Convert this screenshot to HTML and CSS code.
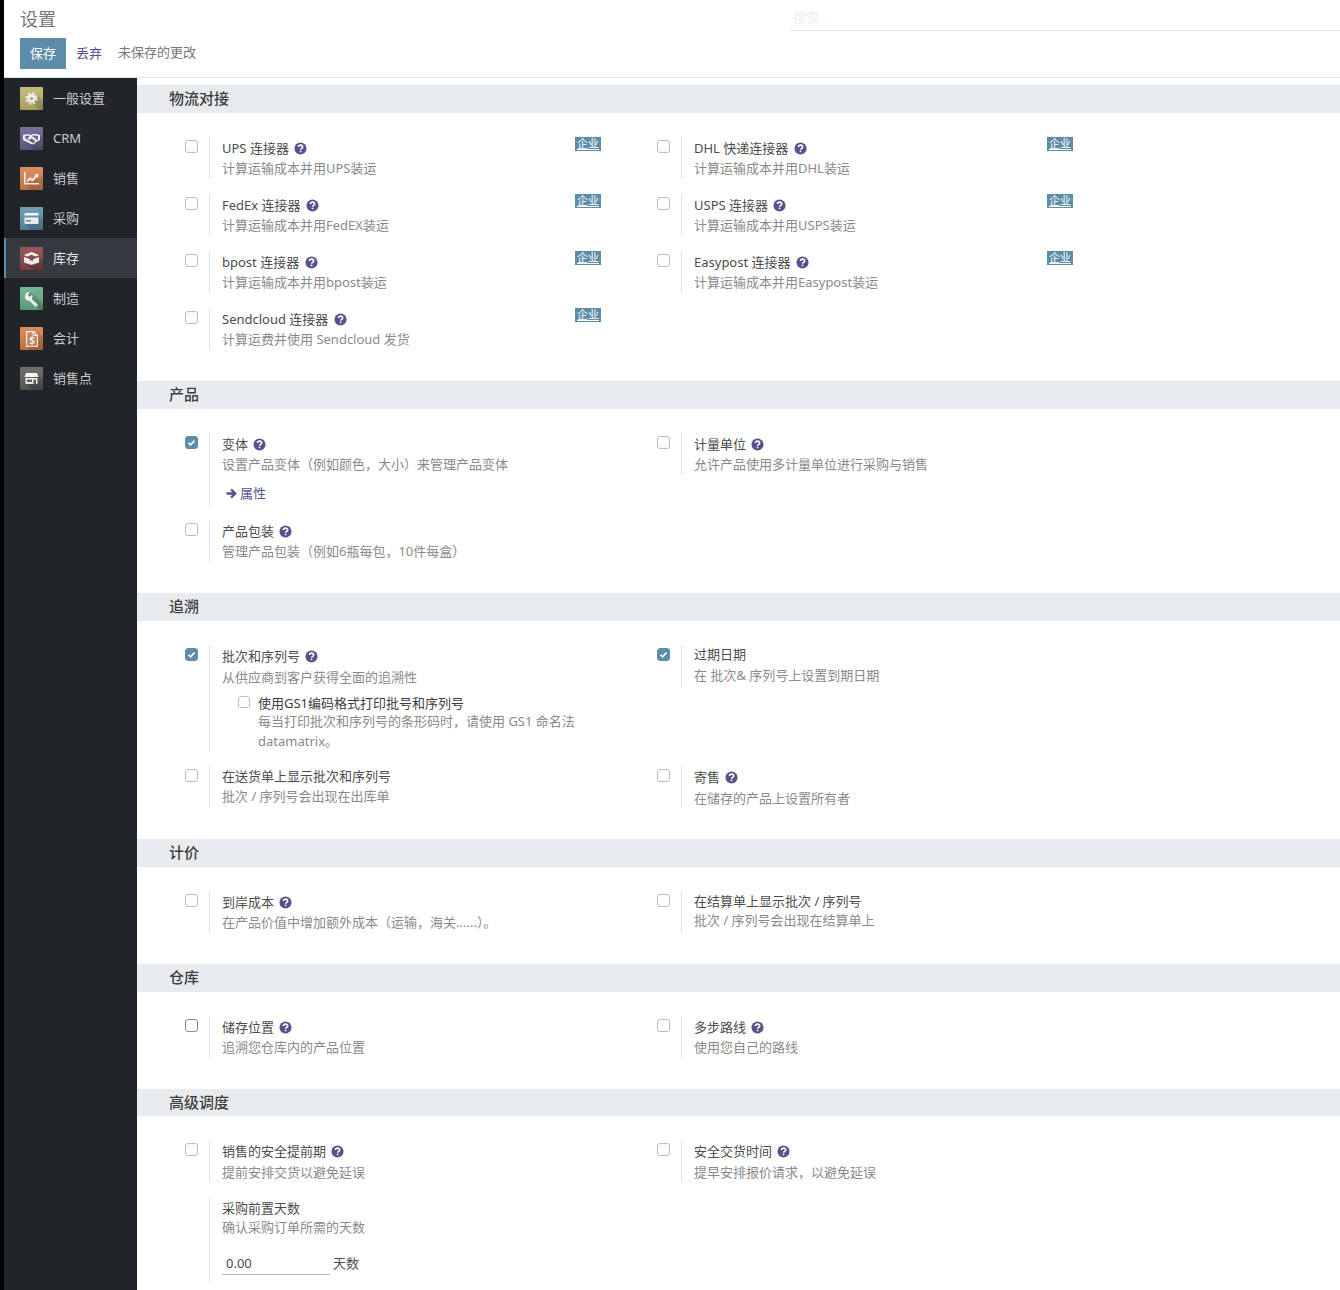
FILE: index.html
```html
<!DOCTYPE html>
<html lang="zh-CN">
<head>
  <meta charset="UTF-8" />
  <title>设置</title>
  <link rel="stylesheet" href="styles.css">
</head>
<body>
  <svg class="defs" width="0" height="0">
    <defs>
      <linearGradient id="sheen" x1="0" y1="0" x2="0" y2="1">
        <stop offset="0" stop-color="#fff" stop-opacity=".1"/>
        <stop offset="1" stop-color="#000" stop-opacity=".14"/>
      </linearGradient>
    </defs>
    <symbol id="help" viewBox="0 0 14 14">
      <circle cx="7" cy="7" r="6.5" fill="currentColor"/>
      <path d="M4.800 5.400c.1-1.300 1-2 2.300-2 1.300 0 2.200.8 2.200 1.900 0 1.700-2.100 1.600-2.100 3" fill="none" stroke="#fff" stroke-width="1.700"/>
      <rect x="6.200" y="9.300" width="1.700" height="1.700" fill="#fff"/>
    </symbol>
    <symbol id="tick" viewBox="0 0 13 13">
      <path d="M3.500 6.700l2.100 2.100 3.900-4.200" fill="none" stroke="#fff" stroke-width="1.600"/>
    </symbol>
  </svg>

  <header class="topbar">
    <div class="topbar-left">
      <div class="page-title">设置</div>
      <div class="actions">
        <button class="btn-save"><span>保存</span></button>
        <a class="btn-discard">丢弃</a>
        <span class="unsaved">未保存的更改</span>
      </div>
    </div>
    <div class="search">搜索...</div>
  </header>

  <div class="main">
    <nav class="sidebar">
      <a class="nav-item">
        <svg class="app-icon" viewBox="0 0 23 23"><rect width="23" height="23" rx="1" fill="#bfb56c"/><path d="M13 17l6 6h4v-9l-5-6z" fill="#a1985a"/><circle cx="11.500" cy="11.500" r="4.300" fill="#fff"/><circle cx="11.500" cy="11.500" r="5.300" fill="none" stroke="#fff" stroke-width="1.800" stroke-dasharray="2.200 2"/><circle cx="11.500" cy="11.500" r="1.800" fill="#bfb56c"/><rect width="23" height="23" rx="1" fill="url(#sheen)"/></svg>
        <span>一般设置</span>
      </a>
      <a class="nav-item">
        <svg class="app-icon" viewBox="0 0 23 23"><rect width="23" height="23" rx="1" fill="#67618f"/><path d="M4 13l10 10h9v-11l-4-5z" fill="#575279"/><path d="M3 8l4-1 4 1 2-1 3 0 4 1v5l-2 1-5 3.500-2.500-.5L6 14.500 3 13z" fill="#fff"/><path d="M5 9l3-.5 2 .5-2.500 2.500 2 1.500 2-2 4 3.500-2.500 1.500-5-3-2.500-1.500zM13 8.500h2.500l2.500.5v3.500l-1 .5-4-3.500-1.500 1z" fill="#67618f"/><rect width="23" height="23" rx="1" fill="url(#sheen)"/></svg>
        <span class="latin">CRM</span>
      </a>
      <a class="nav-item">
        <svg class="app-icon" viewBox="0 0 23 23"><rect width="23" height="23" rx="1" fill="#d9824f"/><path d="M5 17l6 6h12V9z" fill="#bd6f42"/><path d="M4 5h1.500v11H19v1.500H4z" fill="#fff"/><path d="M6.500 13.500l3.500-3.500 2.500 2 3-3.500-1.200-1 4-.7-.3 4-1.100-1-4.300 4.800-2.500-2-2.600 2.400z" fill="#fff"/><rect width="23" height="23" rx="1" fill="url(#sheen)"/></svg>
        <span>销售</span>
      </a>
      <a class="nav-item">
        <svg class="app-icon" viewBox="0 0 23 23"><rect width="23" height="23" rx="1" fill="#5f93ad"/><path d="M5 17l6 6h12V12l-5-5z" fill="#4f7c93"/><rect x="4.500" y="6" width="14" height="11" rx="1" fill="#fff"/><rect x="4.500" y="8.500" width="14" height="2" fill="#5f93ad"/><rect x="6" y="13" width="5" height="1.500" fill="#5f93ad"/><rect width="23" height="23" rx="1" fill="url(#sheen)"/></svg>
        <span>采购</span>
      </a>
      <a class="nav-item active">
        <svg class="app-icon" viewBox="0 0 23 23"><rect width="23" height="23" rx="1" fill="#8f4445"/><path d="M5 15l8 8h10v-9l-4-5z" fill="#763839"/><path d="M4 8l7.500-3 7.500 3-3 1.500-4.500-1.700-4.500 1.700z" fill="#fff"/><path d="M4 10l6 2.300v1.700l1.500-1 1.500 1v-1.700l6-2.300v5.500l-7.500 2.500L4 15.500z" fill="#fff"/><rect width="23" height="23" rx="1" fill="url(#sheen)"/></svg>
        <span>库存</span>
      </a>
      <a class="nav-item">
        <svg class="app-icon" viewBox="0 0 23 23"><rect width="23" height="23" rx="1" fill="#69ad88"/><path d="M5 8l15 15h3v-6L11 5z" fill="#568f70"/><path d="M5 8.500a4.200 4.200 0 0 1 5-3.200l-2.300 2.400 2.100 2.200 2.400-2.200a4.200 4.200 0 0 1-.5 4.200l6.300 5.900-2.400 2.400-6-6.400A4.200 4.200 0 0 1 5 8.500z" fill="#fff"/><rect width="23" height="23" rx="1" fill="url(#sheen)"/></svg>
        <span>制造</span>
      </a>
      <a class="nav-item">
        <svg class="app-icon" viewBox="0 0 23 23"><rect width="23" height="23" rx="1" fill="#d6814a"/><path d="M6 19l4 4h13V10l-6-6z" fill="#b96c3c"/><path d="M6 4h8l4 4v12H6z" fill="#fff"/><path d="M7.200 5.200h6.200l3.400 3.400v10.200H7.200z" fill="#d6814a"/><path d="M13 4.500v4h4" fill="none" stroke="#fff"/><text x="12" y="16.500" class="app-icon-text">$</text><rect width="23" height="23" rx="1" fill="url(#sheen)"/></svg>
        <span>会计</span>
      </a>
      <a class="nav-item">
        <svg class="app-icon" viewBox="0 0 23 23"><rect width="23" height="23" rx="1" fill="#5e5e5c"/><path d="M5 16l7 7h11v-10l-5-5z" fill="#4e4e4c"/><path d="M6 6h11l1.500 4h-14z" fill="#fff"/><path d="M5.500 11h12v6h-12z" fill="#fff"/><rect x="7" y="12.500" width="5" height="2.500" fill="#5e5e5c"/><rect x="13.500" y="12.500" width="2.500" height="4.500" fill="#5e5e5c"/><rect width="23" height="23" rx="1" fill="url(#sheen)"/></svg>
        <span>销售点</span>
      </a>
    </nav>

    <main class="content">
      <h2 class="section-head">物流对接</h2>
      <div class="settings">
        <div class="setting">
          <span class="check"></span>
          <div class="setting-body">
            <div class="label has-help">UPS 连接器 <svg class="help"><use href="#help"/></svg></div>
            <div class="desc">计算运输成本并用UPS装运</div>
          </div>
          <span class="badge">企业</span>
        </div>
        <div class="setting">
          <span class="check"></span>
          <div class="setting-body">
            <div class="label has-help">DHL 快递连接器 <svg class="help"><use href="#help"/></svg></div>
            <div class="desc">计算运输成本并用DHL装运</div>
          </div>
          <span class="badge">企业</span>
        </div>
        <div class="setting">
          <span class="check"></span>
          <div class="setting-body">
            <div class="label has-help">FedEx 连接器 <svg class="help"><use href="#help"/></svg></div>
            <div class="desc">计算运输成本并用FedEX装运</div>
          </div>
          <span class="badge">企业</span>
        </div>
        <div class="setting">
          <span class="check"></span>
          <div class="setting-body">
            <div class="label has-help">USPS 连接器 <svg class="help"><use href="#help"/></svg></div>
            <div class="desc">计算运输成本并用USPS装运</div>
          </div>
          <span class="badge">企业</span>
        </div>
        <div class="setting">
          <span class="check"></span>
          <div class="setting-body">
            <div class="label has-help">bpost 连接器 <svg class="help"><use href="#help"/></svg></div>
            <div class="desc">计算运输成本并用bpost装运</div>
          </div>
          <span class="badge">企业</span>
        </div>
        <div class="setting">
          <span class="check"></span>
          <div class="setting-body">
            <div class="label has-help">Easypost 连接器 <svg class="help"><use href="#help"/></svg></div>
            <div class="desc">计算运输成本并用Easypost装运</div>
          </div>
          <span class="badge">企业</span>
        </div>
        <div class="setting">
          <span class="check"></span>
          <div class="setting-body">
            <div class="label has-help">Sendcloud 连接器 <svg class="help"><use href="#help"/></svg></div>
            <div class="desc">计算运费并使用 Sendcloud 发货</div>
          </div>
          <span class="badge">企业</span>
        </div>
      </div>

      <h2 class="section-head">产品</h2>
      <div class="settings">
        <div class="setting">
          <span class="check on"><svg><use href="#tick"/></svg></span>
          <div class="setting-body">
            <div class="label has-help">变体 <svg class="help"><use href="#help"/></svg></div>
            <div class="desc">设置产品变体（例如颜色，大小）来管理产品变体</div>
            <a class="link"><svg class="arrow" viewBox="0 0 12 12"><path d="M.5 6h9M5.500 1.500l4.500 4.500-4.500 4.500" fill="none" stroke="currentColor" stroke-width="2.500"/></svg>属性</a>
          </div>
        </div>
        <div class="setting">
          <span class="check"></span>
          <div class="setting-body">
            <div class="label has-help">计量单位 <svg class="help"><use href="#help"/></svg></div>
            <div class="desc">允许产品使用多计量单位进行采购与销售</div>
          </div>
        </div>
        <div class="setting">
          <span class="check"></span>
          <div class="setting-body">
            <div class="label has-help">产品包装 <svg class="help"><use href="#help"/></svg></div>
            <div class="desc">管理产品包装（例如6瓶每包，10件每盒）</div>
          </div>
        </div>
      </div>

      <h2 class="section-head">追溯</h2>
      <div class="settings">
        <div class="setting">
          <span class="check on"><svg><use href="#tick"/></svg></span>
          <div class="setting-body">
            <div class="label has-help">批次和序列号 <svg class="help"><use href="#help"/></svg></div>
            <div class="desc lower">从供应商到客户获得全面的追溯性</div>
            <div class="sub-option">
              <span class="check small"></span>
              <div>
                <div class="label sub-label">使用GS1编码格式打印批号和序列号</div>
                <div class="desc">每当打印批次和序列号的条形码时，请使用 GS1 命名法 datamatrix。</div>
              </div>
            </div>
          </div>
        </div>
        <div class="setting">
          <span class="check on"><svg><use href="#tick"/></svg></span>
          <div class="setting-body">
            <div class="label raised">过期日期</div>
            <div class="desc">在 批次&amp; 序列号上设置到期日期</div>
          </div>
        </div>
        <div class="setting">
          <span class="check"></span>
          <div class="setting-body">
            <div class="label">在送货单上显示批次和序列号</div>
            <div class="desc lower">批次 / 序列号会出现在出库单</div>
          </div>
        </div>
        <div class="setting">
          <span class="check"></span>
          <div class="setting-body">
            <div class="label has-help">寄售 <svg class="help"><use href="#help"/></svg></div>
            <div class="desc lower">在储存的产品上设置所有者</div>
          </div>
        </div>
      </div>

      <h2 class="section-head">计价</h2>
      <div class="settings">
        <div class="setting">
          <span class="check"></span>
          <div class="setting-body">
            <div class="label has-help">到岸成本 <svg class="help"><use href="#help"/></svg></div>
            <div class="desc">在产品价值中增加额外成本（运输，海关......）。</div>
          </div>
        </div>
        <div class="setting">
          <span class="check"></span>
          <div class="setting-body">
            <div class="label">在结算单上显示批次 / 序列号</div>
            <div class="desc">批次 / 序列号会出现在结算单上</div>
          </div>
        </div>
      </div>

      <h2 class="section-head">仓库</h2>
      <div class="settings">
        <div class="setting">
          <span class="check dark"></span>
          <div class="setting-body">
            <div class="label has-help">储存位置 <svg class="help"><use href="#help"/></svg></div>
            <div class="desc">追溯您仓库内的产品位置</div>
          </div>
        </div>
        <div class="setting">
          <span class="check"></span>
          <div class="setting-body">
            <div class="label has-help">多步路线 <svg class="help"><use href="#help"/></svg></div>
            <div class="desc">使用您自己的路线</div>
          </div>
        </div>
      </div>

      <h2 class="section-head short">高级调度</h2>
      <div class="settings">
        <div class="setting">
          <span class="check"></span>
          <div class="setting-body">
            <div class="label has-help">销售的安全提前期 <svg class="help"><use href="#help"/></svg></div>
            <div class="desc lower">提前安排交货以避免延误</div>
          </div>
        </div>
        <div class="setting">
          <span class="check"></span>
          <div class="setting-body">
            <div class="label has-help">安全交货时间 <svg class="help"><use href="#help"/></svg></div>
            <div class="desc lower">提早安排报价请求，以避免延误</div>
          </div>
        </div>
        <div class="setting">
          <span class="check blank"></span>
          <div class="setting-body tall">
            <div class="label">采购前置天数</div>
            <div class="desc">确认采购订单所需的天数</div>
            <div class="days"><span class="days-input">0.00</span><span class="days-unit">天数</span></div>
          </div>
        </div>
      </div>
    </main>
  </div>
</body>
</html>
```

FILE: styles.css
```css
* {
  box-sizing: border-box;
}

html, body {
  height: 100%;
}

body {
  margin: 0;
  border-left: 4px solid #000;
  overflow: hidden;
  background: #fff;
  font-family: "Noto Sans", "Noto Sans CJK SC", sans-serif;
  font-size: 13px;
  color: #4c4c4c;
}

.defs {
  position: absolute;
}

/* top bar */
.topbar {
  display: flex;
  justify-content: space-between;
  height: 78px;
  padding-left: 16px;
  border-bottom: 1px solid #dee2e6;
}

.page-title {
  height: 32px;
  padding-top: 7px;
  font-size: 18px;
  line-height: 24px;
  color: #777;
}

.actions {
  display: flex;
  align-items: center;
  margin-top: 6px;
}

.btn-save {
  width: 46px;
  height: 31px;
  padding: 0 0 2px;
  border: none;
  background: #5d8da8;
  color: #fff;
  font: inherit;
}

.btn-discard {
  margin: -2px 0 0 10px;
  color: #5c4f8c;
}

.unsaved {
  margin: -4px 0 0 16px;
  color: #777;
}

.search {
  width: 549px;
  height: 31px;
  padding: 8px 2px 0;
  border-bottom: 1px solid #dee2e6;
  color: #eee;
  line-height: 18px;
}

/* sidebar */
.main {
  display: flex;
  height: calc(100vh - 78px);
}

.sidebar {
  flex: none;
  width: 133px;
  background: #212529;
}

.nav-item {
  display: flex;
  align-items: center;
  gap: 10px;
  height: 40px;
  padding-left: 16px;
  color: #c9cbcd;
}

.nav-item span {
  padding-bottom: 2px;
}

.nav-item span.latin {
  padding-bottom: 0;
}

.nav-item.active {
  padding-left: 14px;
  border-left: 2px solid #5d8da8;
  background: #343a40;
  color: #e6e7e8;
}

.app-icon {
  flex: none;
  width: 23px;
  height: 23px;
}

.app-icon-text {
  font-size: 10px;
  font-weight: 700;
  fill: #fff;
  text-anchor: middle;
}

/* settings */
.content {
  flex: 1;
  padding-top: 7px;
  overflow: hidden;
}

.section-head {
  margin: 0;
  height: 28px;
  padding-left: 32px;
  background: #e9ecef;
  font-size: 15px;
  font-weight: 500;
  line-height: 26px;
  color: #3d3d3d;
}

.section-head.short {
  height: 27px;
}

.settings {
  display: grid;
  grid-template-columns: 472px 472px;
  row-gap: 15px;
  padding: 24px 0 31px 48px;
}

.setting {
  display: flex;
  align-items: flex-start;
  width: 416px;
}

.check {
  flex: none;
  width: 13px;
  height: 13px;
  margin: 3px 11px 0 0;
  border: 1px solid #bbb;
  border-radius: 3px;
  background: #fff;
}

.check svg {
  display: block;
  width: 13px;
  height: 13px;
  margin: -1px;
}

.check.on {
  border-color: #5d8da8;
  background: #5d8da8;
}

.check.dark {
  border-color: #888;
}

.check.blank {
  visibility: hidden;
}

.check.small {
  width: 12px;
  height: 12px;
  margin: 1px 8px 0 0;
}

.setting-body {
  flex: 1;
  min-height: 42px;
  padding-left: 12px;
  border-left: 1px solid #dee2e6;
}

.setting-body.tall {
  min-height: 84px;
  margin-top: 1px;
}

.label {
  height: 19px;
  line-height: 20px;
  color: #4c4c4c;
}

.label.raised {
  height: 20px;
  line-height: 18px;
}

.label.has-help {
  height: 21px;
  line-height: 22px;
}

.help {
  width: 13px;
  height: 13px;
  margin-left: 2px;
  color: #5c4f8c;
  vertical-align: -2px;
}

.desc {
  line-height: 20px;
  color: #8a8a8a;
}

.desc.lower {
  margin-top: 1px;
}

.badge {
  flex: none;
  align-self: flex-start;
  width: 26px;
  height: 14px;
  background: #5d8da8;
  color: #fff;
  font-size: 11px;
  line-height: 13px;
  text-align: center;
  text-decoration: underline;
}

.link {
  display: block;
  margin-top: 9px;
  padding: 0 0 2px 4px;
  line-height: 20px;
  color: #5c4f8c;
}

.arrow {
  width: 11px;
  height: 11px;
  margin-right: 3px;
  vertical-align: -1px;
}

.sub-option {
  display: flex;
  margin-top: 8px;
  padding-left: 16px;
}

.label.sub-label {
  height: 16px;
  line-height: 16px;
  color: #3d3d3d;
}

.days {
  display: flex;
  align-items: flex-end;
  margin-top: 14px;
}

.days-input {
  width: 108px;
  height: 23px;
  padding-left: 4px;
  border-bottom: 1px solid #bbb;
  line-height: 23px;
}

.days-unit {
  margin-left: 3px;
  line-height: 24px;
}
```
